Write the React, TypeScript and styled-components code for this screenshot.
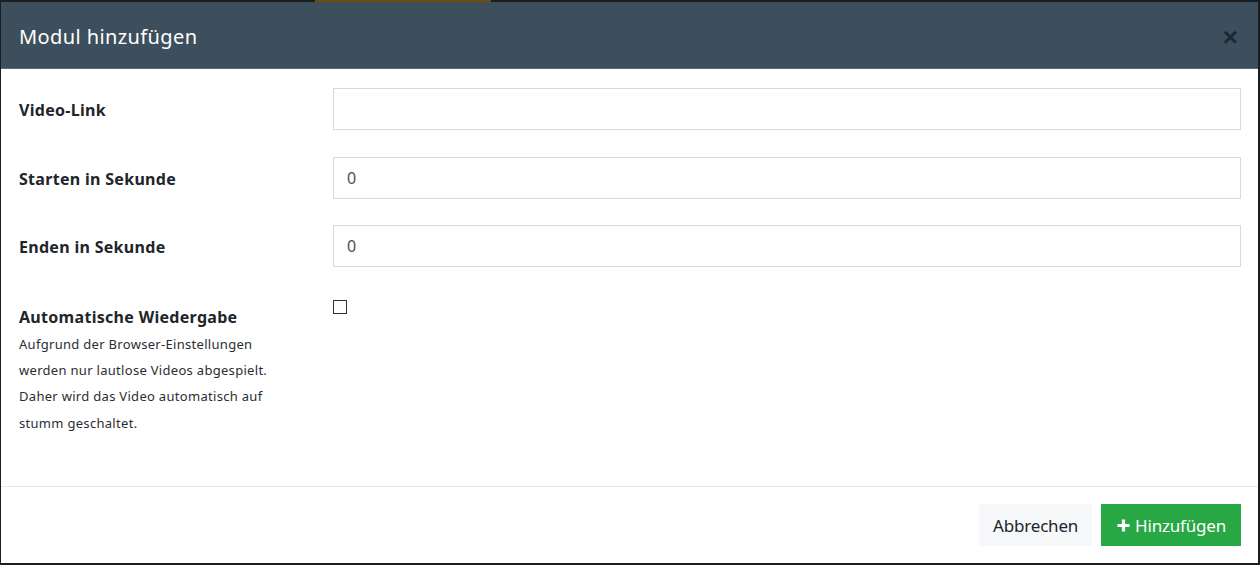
import styled, { createGlobalStyle } from 'styled-components';

const GlobalStyle = createGlobalStyle`
  html, body {
    margin: 0;
    padding: 0;
    background: #1b1e21;
  }
  * {
    box-sizing: border-box;
  }
`;

const fields = [
  { label: 'Video-Link', value: '' },
  { label: 'Starten in Sekunde', value: '0' },
  { label: 'Enden in Sekunde', value: '0' },
];

export default function App() {
  return (
    <>
      <GlobalStyle />
      <Backdrop>
        <TopStrip>
          <GoldTab />
        </TopStrip>
        <Modal>
          <Header>
            <Title>Modul hinzufügen</Title>
            <CloseButton aria-label="Schließen">×</CloseButton>
          </Header>
          <Body>
            {fields.map((f) => (
              <Row key={f.label}>
                <Label>{f.label}</Label>
                <Input defaultValue={f.value} />
              </Row>
            ))}
            <Row>
              <LabelBlock>
                <Label $top>Automatische Wiedergabe</Label>
                <Help>
                  Aufgrund der Browser-Einstellungen werden nur lautlose Videos abgespielt. Daher wird
                  das Video automatisch auf stumm geschaltet.
                </Help>
              </LabelBlock>
              <CheckCell>
                <Checkbox type="checkbox" />
              </CheckCell>
            </Row>
          </Body>
          <Footer>
            <Button>Abbrechen</Button>
            <Button $primary>
              <svg width="15" height="15" viewBox="0 0 15 15">
                <path d="M7.5 1.5v12M1.5 7.5h12" stroke="#fff" strokeWidth="3.2" />
              </svg>
              Hinzufügen
            </Button>
          </Footer>
        </Modal>
      </Backdrop>
    </>
  );
}

const Backdrop = styled.div`
  width: 1260px;
  height: 565px;
  display: flex;
  flex-direction: column;
  padding: 0 2px 2px 1px;
  overflow: hidden;
`;

const TopStrip = styled.div`
  height: 2px;
  flex-shrink: 0;
`;

const GoldTab = styled.div`
  margin-left: 314px;
  width: 176px;
  height: 2px;
  background: #6b4f0c;
`;

const Modal = styled.div`
  flex: 1;
  display: flex;
  flex-direction: column;
  background: #fff;
  font-family: 'Noto Sans', 'Open Sans', sans-serif;
  color: #212529;
`;

const Header = styled.div`
  height: 67px;
  flex-shrink: 0;
  background: #3d4f5d;
  border-bottom: 1px solid #5a6a76;
  display: flex;
  align-items: center;
  justify-content: space-between;
  padding: 3px 20px 0 18px;
`;

const Title = styled.h5`
  margin: 0;
  font-size: 20px;
  font-weight: 400;
  color: #fff;
  letter-spacing: 0.4px;
`;

const CloseButton = styled.button`
  border: 0;
  background: transparent;
  padding: 0;
  margin-top: 1px;
  font-family: 'Liberation Sans', sans-serif;
  font-size: 26px;
  font-weight: 700;
  line-height: 1;
  color: #1e2830;
`;

const Body = styled.div`
  flex: 1;
  padding: 19px 17px 0 18px;
  display: flex;
  flex-direction: column;
  gap: 26.5px;
`;

const Row = styled.div`
  display: grid;
  grid-template-columns: 314px 1fr;
`;

const LabelBlock = styled.div`
  display: flex;
  flex-direction: column;
`;

const Label = styled.label<{ $top?: boolean }>`
  font-size: 16px;
  font-weight: 700;
  line-height: 24px;
  letter-spacing: 0.3px;
  padding-top: ${({ $top }) => ($top ? '11px' : '2px')};
  align-self: ${({ $top }) => ($top ? 'flex-start' : 'center')};
`;

const Help = styled.div`
  padding-top: 2px;
  font-size: 13px;
  line-height: 26.4px;
  width: 275px;
  letter-spacing: 0.3px;
  color: #2a2e33;
`;

const Input = styled.input`
  height: 42px;
  width: 100%;
  border: 1px solid #d6dade;
  padding: 0 13px;
  font-family: 'Noto Sans', sans-serif;
  font-size: 16px;
  color: #495057;
  outline: none;
`;

const CheckCell = styled.div`
  padding-top: 6px;
`;

const Checkbox = styled.input`
  appearance: none;
  margin: 0;
  width: 14px;
  height: 14px;
  border: 1px solid #333;
  background: #fff;
  display: block;
`;

const Footer = styled.div`
  height: 77px;
  flex-shrink: 0;
  border-top: 1px solid #e6e8eb;
  display: flex;
  justify-content: flex-end;
  align-items: center;
  gap: 9px;
  padding: 0 17px 0 0;
`;

const Button = styled.button<{ $primary?: boolean }>`
  height: 42px;
  border: 0;
  display: flex;
  align-items: center;
  gap: 4px;
  padding: 0 ${({ $primary }) => ($primary ? '15px' : '14px')};
  font-family: 'Noto Sans', sans-serif;
  font-size: 17px;
  letter-spacing: -0.2px;
  background: ${({ $primary }) => ($primary ? '#28a745' : '#f7f8fa')};
  color: ${({ $primary }) => ($primary ? '#fff' : '#212529')};
`;
